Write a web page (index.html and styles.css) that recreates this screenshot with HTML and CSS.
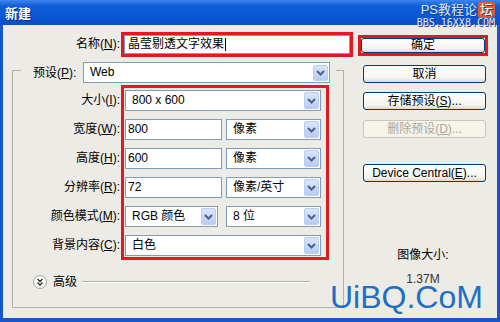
FILE: index.html
```html
<!DOCTYPE html>
<html lang="zh-CN">
<head>
<meta charset="UTF-8" />
<title>新建</title>
<link rel="stylesheet" href="styles.css">
</head>
<body>
  <div class="window">
    <div class="titlebar">
      <span class="title">新建</span>
    </div>

    <div class="client">
      <div class="form-col">
        <div class="name-row">
          <span class="name-label">名称(<u>N</u>):</span>
          <div class="mark name-mark">
            <div class="textbox">晶莹剔透文字效果<span class="caret"></span></div>
          </div>
        </div>

        <fieldset class="group">
          <legend class="preset">
            <span class="preset-label">预设(<u>P</u>):</span>
            <div class="select preset-select">
              <span class="value">Web</span>
              <span class="arrow"><svg viewBox="0 0 9 6" aria-hidden="true"><path d="M1 1l3.5 3.5L8 1" /></svg></span>
            </div>
          </legend>

          <div class="fields">
            <div class="labels">
              <span class="label">大小(<u>I</u>):</span>
              <span class="label">宽度(<u>W</u>):</span>
              <span class="label">高度(<u>H</u>):</span>
              <span class="label">分辨率(<u>R</u>):</span>
              <span class="label">颜色模式(<u>M</u>):</span>
              <span class="label">背景内容(<u>C</u>):</span>
            </div>
            <div class="mark field-mark">
              <div class="row">
                <div class="select full">
                  <span class="value">800 x 600</span>
                  <span class="arrow"><svg viewBox="0 0 9 6" aria-hidden="true"><path d="M1 1l3.5 3.5L8 1" /></svg></span>
                </div>
              </div>
              <div class="row">
                <div class="input">800</div>
                <div class="select unit">
                  <span class="value">像素</span>
                  <span class="arrow"><svg viewBox="0 0 9 6" aria-hidden="true"><path d="M1 1l3.5 3.5L8 1" /></svg></span>
                </div>
              </div>
              <div class="row">
                <div class="input">600</div>
                <div class="select unit">
                  <span class="value">像素</span>
                  <span class="arrow"><svg viewBox="0 0 9 6" aria-hidden="true"><path d="M1 1l3.5 3.5L8 1" /></svg></span>
                </div>
              </div>
              <div class="row">
                <div class="input">72</div>
                <div class="select unit">
                  <span class="value">像素/英寸</span>
                  <span class="arrow"><svg viewBox="0 0 9 6" aria-hidden="true"><path d="M1 1l3.5 3.5L8 1" /></svg></span>
                </div>
              </div>
              <div class="row wide-gap">
                <div class="select mode">
                  <span class="value">RGB 颜色</span>
                  <span class="arrow"><svg viewBox="0 0 9 6" aria-hidden="true"><path d="M1 1l3.5 3.5L8 1" /></svg></span>
                </div>
                <div class="select unit">
                  <span class="value">8 位</span>
                  <span class="arrow"><svg viewBox="0 0 9 6" aria-hidden="true"><path d="M1 1l3.5 3.5L8 1" /></svg></span>
                </div>
              </div>
              <div class="row">
                <div class="select full">
                  <span class="value">白色</span>
                  <span class="arrow"><svg viewBox="0 0 9 6" aria-hidden="true"><path d="M1 1l3.5 3.5L8 1" /></svg></span>
                </div>
              </div>
            </div>
          </div>

          <div class="advanced">
            <svg class="adv-icon" viewBox="0 0 14 14" aria-hidden="true">
              <circle cx="7" cy="7" r="6.5" />
              <path d="M4.5 4l2.5 2.5L9.5 4M4.5 7.5L7 10l2.5-2.5" />
            </svg>
            <span class="adv-text">高级</span>
            <span class="adv-line"></span>
          </div>
        </fieldset>
      </div>

      <div class="button-col">
        <div class="mark ok-mark"><button class="btn ok">确定</button></div>
        <button class="btn cancel">取消</button>
        <button class="btn save">存储预设(<u>S</u>)...</button>
        <button class="btn delete" disabled>删除预设(<u>D</u>)...</button>
        <button class="btn device">Device Central(<u>E</u>)...</button>
        <div class="info-title">图像大小:</div>
        <div class="info-value">1.37M</div>
      </div>
    </div>

    <!-- watermarks stamped over the screenshot -->
    <div class="wm-top">
      <div class="wm-line">PS教程论<span class="badge">坛</span></div>
      <div class="wm-url">BBS.16XX8.COM</div>
    </div>
    <div class="wm-bottom">UiBQ.CoM</div>
  </div>
</body>
</html>
```

FILE: styles.css
```css
/* Reset */
* {
  box-sizing: border-box;
}

body {
  margin: 0;
  font-family: "Liberation Sans", "Noto Sans CJK SC", sans-serif;
  font-size: 12px;
  color: #000;
}

/* XP style window frame */
.window {
  position: relative;
  width: 500px;
  height: 322px;
  background: #1656c9;
  display: flex;
  flex-direction: column;
  overflow: hidden;
}

.titlebar {
  flex: none;
  height: 25px;
  padding: 2px 0 0 5px;
  display: flex;
  align-items: center;
  background: linear-gradient(#3c86ec, #0e5ddb 25%, #0a55d2 70%, #0b4fc6);
}

.title {
  color: #fff;
  font-weight: bold;
  font-size: 13px;
  line-height: 16px;
  text-shadow: 1px 1px #0a2a7a;
}

.client {
  flex: 1;
  margin: 0 3px 4px;
  background: #edebe5;
  display: flex;
}

/* red highlight frames */
.mark {
  border: 3px solid #e01a22;
}

/* Left part */
.form-col {
  width: 352px;
}

.name-row {
  display: flex;
  height: 25px;
  margin-top: 7px;
}

.name-label {
  width: 117px;
  text-align: right;
  line-height: 25px;
}

.name-mark {
  width: 232px;
  margin-left: 1px;
}

.textbox {
  height: 100%;
  padding-left: 3px;
  line-height: 17px;
  background: #fff;
  border: 1px solid #7f9db9;
  display: flex;
  align-items: center;
}

.caret {
  width: 1px;
  height: 13px;
  margin-left: 1px;
  background: #000;
}

.group {
  width: 332px;
  margin: 1px 0 0 9px;
  min-width: 0;
  padding: 2px 13px 18px 8px;
  border: 1px solid #b2b1a8;
}

.preset {
  display: flex;
  align-items: center;
  padding: 4px 6px 0 12px;
}

.preset-label {
  width: 47px;
  margin-right: 3px;
  line-height: 20px;
}

.preset-select {
  width: 247px;
  height: 20px;
}

.fields {
  display: flex;
}

.labels {
  width: 99px;
  padding-top: 5px;
  display: flex;
  flex-direction: column;
  gap: 8px;
}

.label {
  height: 21px;
  line-height: 21px;
  text-align: right;
  white-space: nowrap;
}

.field-mark {
  width: 208px;
  margin-left: 1px;
  padding: 2px 5px 1px 1px;
  display: flex;
  flex-direction: column;
  gap: 8px;
}

.row {
  display: flex;
  height: 21px;
  gap: 4px;
}

.row.wide-gap {
  gap: 8px;
}

/* combo boxes and text inputs */
.select {
  height: 21px;
  display: flex;
  align-items: center;
  background: #fff;
  border: 1px solid #7f9db9;
}

.select .value {
  flex: 1;
  padding-left: 6px;
  line-height: 17px;
  white-space: nowrap;
  overflow: hidden;
}

.arrow {
  width: 15px;
  height: 17px;
  margin-right: 1px;
  border-radius: 2px;
  border: 1px solid #bccbf0;
  background: linear-gradient(#dae5fc, #b8cbf5);
  display: flex;
  align-items: center;
  justify-content: center;
}

.preset-select .arrow {
  height: 16px;
}

.arrow svg {
  width: 9px;
  height: 6px;
  fill: none;
  stroke: #4d6185;
  stroke-width: 2;
}

.full {
  width: 196px;
}

.unit {
  width: 95px;
}

.mode {
  width: 93px;
}

.input {
  width: 97px;
  height: 21px;
  padding-left: 2px;
  line-height: 19px;
  background: #fff;
  border: 1px solid #7f9db9;
}

.advanced {
  display: flex;
  align-items: center;
  height: 14px;
  margin-top: 15px;
  padding-left: 12px;
}

.adv-icon {
  width: 14px;
  height: 14px;
}

.adv-icon circle {
  fill: #f8f8f6;
  stroke: #a5a49c;
  stroke-width: 1;
}

.adv-icon path {
  fill: none;
  stroke: #2e2e2e;
  stroke-width: 1.3;
}

.adv-text {
  margin-left: 6px;
  line-height: 14px;
}

.adv-line {
  width: 228px;
  height: 2px;
  margin-left: 5px;
  border-top: 1px solid #b2b1a8;
  border-bottom: 1px solid #fff;
}

/* Right part */
.button-col {
  width: 130px;
  margin-left: 3px;
  padding-top: 10px;
  display: flex;
  flex-direction: column;
}

.btn {
  width: 123px;
  height: 18px;
  margin-left: 5px;
  padding: 0;
  font: inherit;
  line-height: 16px;
  color: #000;
  border: 1px solid #003c74;
  border-radius: 3px;
  background: linear-gradient(#fff, #f5f4f0 75%, #dad8ce);
}

.ok-mark {
  width: 130px;
}

.btn.ok {
  width: 100%;
  height: 15px;
  margin: 0;
  line-height: 13px;
}

.cancel {
  margin-top: 9px;
}

.save {
  margin-top: 9px;
}

.delete {
  margin-top: 10px;
  color: #aca899;
  border-color: #c9c7ba;
  background: #f5f4ea;
}

.device {
  margin-top: 26px;
}

.info-title {
  margin-top: 66px;
  line-height: 14px;
  text-align: center;
}

.info-value {
  margin-top: 11px;
  line-height: 12px;
  text-align: center;
  color: #333;
}

/* Watermarks on top of the screenshot */
.wm-top {
  position: absolute;
  top: 2px;
  right: 5px;
  text-align: right;
  color: #dfe8fb;
  text-shadow: 1px 1px #1c3f8a;
}

.wm-line {
  font-size: 13px;
  line-height: 16px;
}

.badge {
  display: inline-block;
  margin-left: 1px;
  padding: 0 2px;
  border-radius: 3px;
  background: #d8603c;
  color: #fff;
}

.wm-url {
  font-family: "DejaVu Sans Mono", monospace;
  font-size: 10px;
  line-height: 10px;
}

.wm-bottom {
  position: absolute;
  top: 286px;
  left: 330px;
  font-size: 32px;
  line-height: 23px;
  color: #1e6fc6;
}
```
